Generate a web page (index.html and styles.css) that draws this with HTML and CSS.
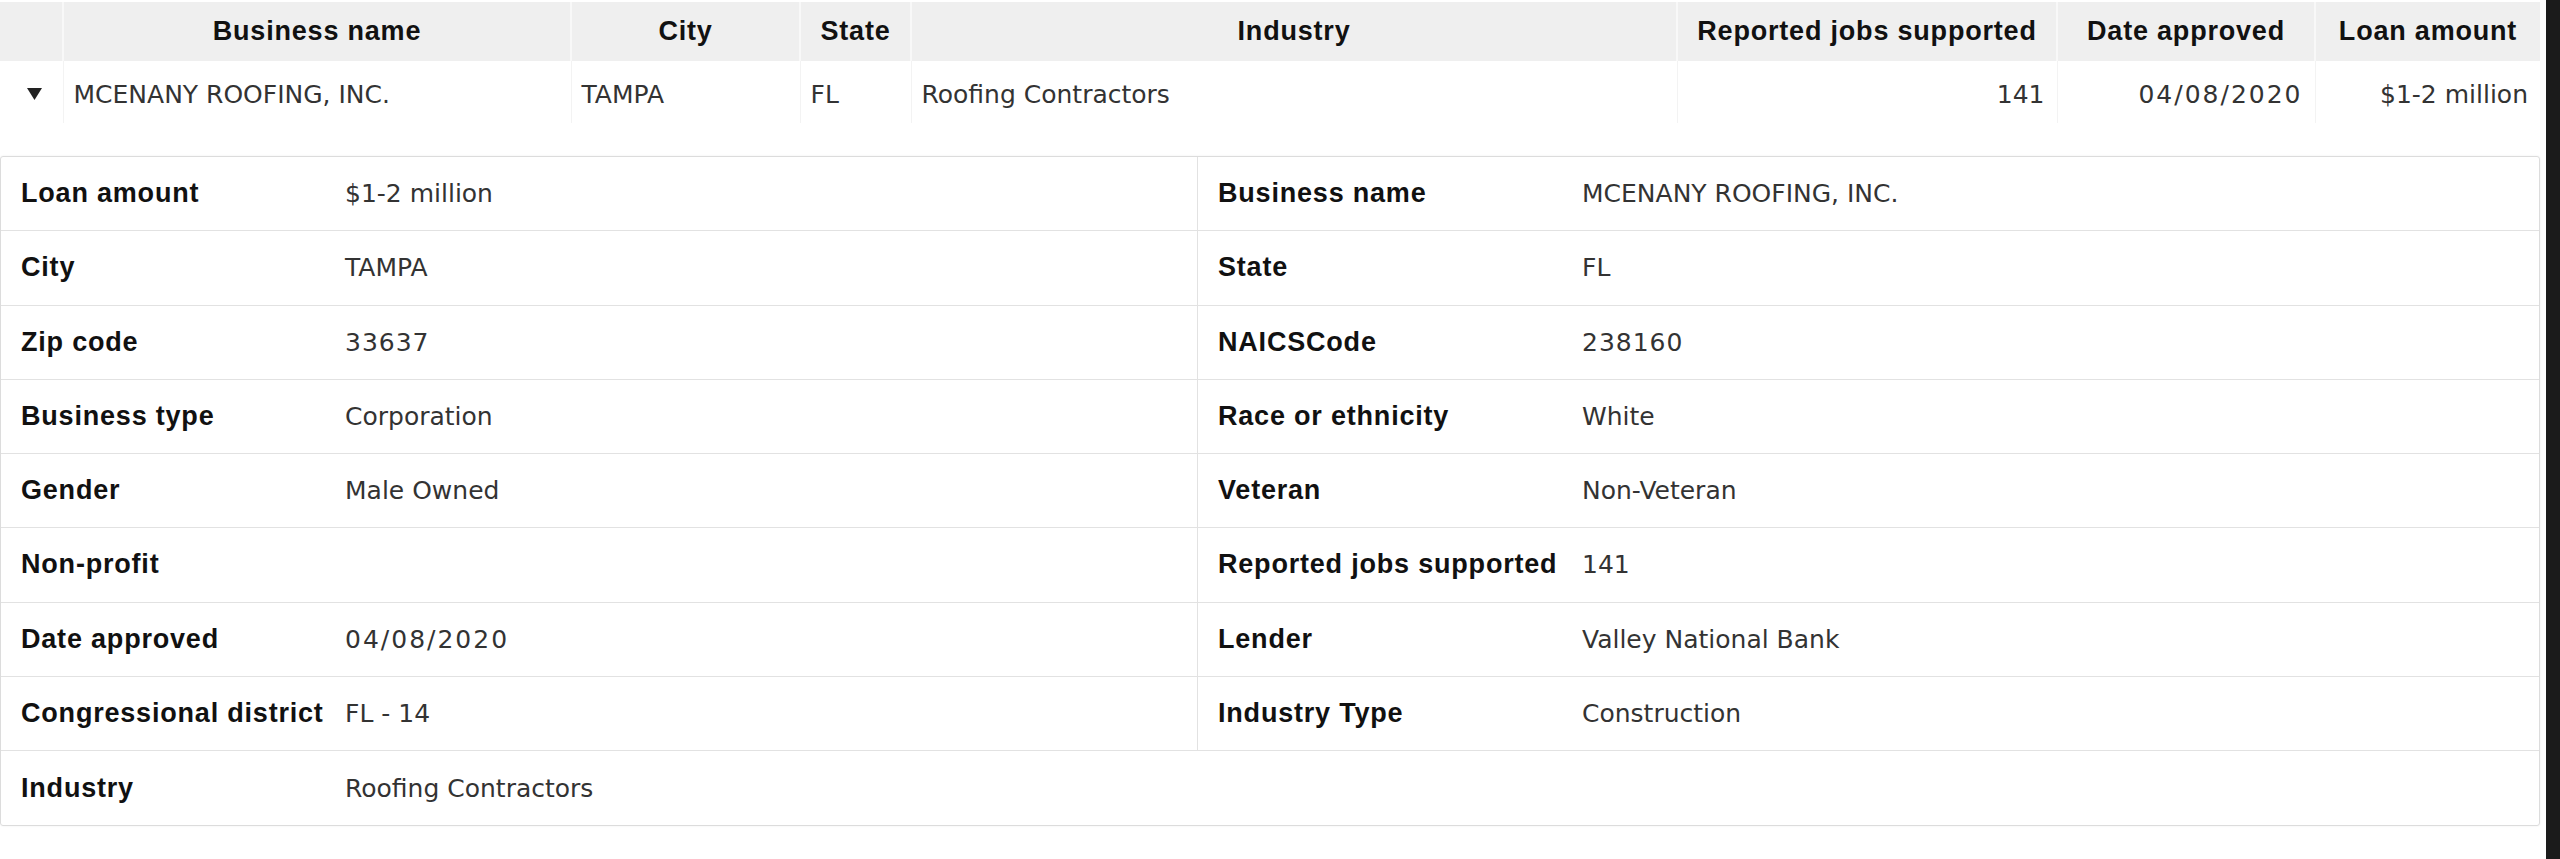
FILE: index.html
```html
<!DOCTYPE html>
<html lang="en">
<head>
<meta charset="utf-8">
<title>Loan detail</title>
<link rel="stylesheet" href="styles.css">
</head>
<body>
<div class="page">
  <main class="content">
    <table class="summary">
      <colgroup>
        <col class="c-toggle"><col class="c-name"><col class="c-city"><col class="c-state"><col class="c-industry"><col class="c-jobs"><col class="c-date"><col class="c-loan">
      </colgroup>
      <thead>
        <tr>
          <th></th>
          <th>Business name</th>
          <th>City</th>
          <th>State</th>
          <th>Industry</th>
          <th>Reported jobs supported</th>
          <th>Date approved</th>
          <th>Loan amount</th>
        </tr>
      </thead>
      <tbody>
        <tr>
          <td class="toggle"><svg class="caret" width="15" height="12" viewBox="0 0 15 12"><polygon points="0,0 15,0 7.5,12" fill="#222"/></svg></td>
          <td>MCENANY ROOFING, INC.</td>
          <td>TAMPA</td>
          <td>FL</td>
          <td>Roofing Contractors</td>
          <td class="num">141</td>
          <td class="num date">04/08/2020</td>
          <td class="num">$1-2 million</td>
        </tr>
      </tbody>
    </table>

    <section class="details">
      <div class="pair left"><span class="label">Loan amount</span><span class="value">$1-2 million</span></div>
      <div class="pair right"><span class="label">Business name</span><span class="value">MCENANY ROOFING, INC.</span></div>

      <div class="pair left"><span class="label">City</span><span class="value">TAMPA</span></div>
      <div class="pair right"><span class="label">State</span><span class="value">FL</span></div>

      <div class="pair left"><span class="label">Zip code</span><span class="value digits">33637</span></div>
      <div class="pair right"><span class="label">NAICSCode</span><span class="value digits">238160</span></div>

      <div class="pair left"><span class="label">Business type</span><span class="value">Corporation</span></div>
      <div class="pair right"><span class="label">Race or ethnicity</span><span class="value">White</span></div>

      <div class="pair left"><span class="label">Gender</span><span class="value">Male Owned</span></div>
      <div class="pair right"><span class="label">Veteran</span><span class="value">Non-Veteran</span></div>

      <div class="pair left"><span class="label">Non-profit</span><span class="value"></span></div>
      <div class="pair right"><span class="label">Reported jobs supported</span><span class="value">141</span></div>

      <div class="pair left"><span class="label">Date approved</span><span class="value date">04/08/2020</span></div>
      <div class="pair right"><span class="label">Lender</span><span class="value">Valley National Bank</span></div>

      <div class="pair left"><span class="label">Congressional district</span><span class="value">FL - 14</span></div>
      <div class="pair right"><span class="label">Industry Type</span><span class="value">Construction</span></div>

      <div class="pair left last"><span class="label">Industry</span><span class="value">Roofing Contractors</span></div>
    </section>
  </main>
  <div class="edge"></div>
</div>
</body>
</html>
```

FILE: styles.css
```css
* {
  box-sizing: border-box;
}

body {
  margin: 0;
  background: #ffffff;
}

.page {
  display: flex;
  justify-content: space-between;
  height: 859px;
}

.content {
  width: 2540px;
  padding-top: 2px;
}

.edge {
  width: 14px;
  background: #1b1b1b;
}

/* summary table */
.summary {
  width: 2540px;
  table-layout: fixed;
  border-collapse: collapse;
}

.c-toggle { width: 63px; }
.c-name { width: 508px; }
.c-city { width: 229px; }
.c-state { width: 111px; }
.c-industry { width: 766px; }
.c-jobs { width: 380px; }
.c-date { width: 258px; }
.c-loan { width: 225px; }

.summary th {
  height: 59px;
  padding: 0 6px;
  background: #efefef;
  border-left: 2px solid #f8f8f8;
  font: 700 27px "Liberation Sans", Arial, sans-serif;
  letter-spacing: 0.8px;
  color: #111111;
  text-align: center;
  white-space: nowrap;
}

.summary th:first-child {
  border-left: 0;
}

.summary td {
  height: 62px;
  padding: 4px 10px 0;
  border-left: 1px solid #f3f3f3;
  font: 25px "DejaVu Sans", sans-serif;
  color: #333333;
  white-space: nowrap;
}

.summary td:first-child {
  border-left: 0;
}

.summary td.num {
  text-align: right;
  padding-right: 12px;
}

.summary td.toggle {
  padding: 4px 0 0 27px;
}

.caret {
  display: block;
}

/* detail card */
.details {
  margin-top: 33px;
  display: grid;
  grid-template-columns: 1196px 1fr;
  border: 1px solid #dcdcdc;
  border-radius: 3px;
  box-shadow: 0 0 2px rgba(0, 0, 0, 0.08);
}

.pair {
  display: flex;
  align-items: center;
  height: 74.25px;
  border-bottom: 1px solid #e2e2e2;
}

.pair.right {
  border-left: 1px solid #e2e2e2;
}

.pair.last {
  border-bottom: 0;
}

.label {
  padding-left: 20px;
  font: 700 27px "Liberation Sans", Arial, sans-serif;
  letter-spacing: 0.8px;
  color: #111111;
  white-space: nowrap;
}

.left .label {
  flex: 0 0 344px;
}

.right .label {
  flex: 0 0 384px;
}

.value {
  font: 25px "DejaVu Sans", sans-serif;
  color: #333333;
  white-space: nowrap;
}

.digits {
  letter-spacing: 1px;
}

.date {
  letter-spacing: 2px;
}
```
